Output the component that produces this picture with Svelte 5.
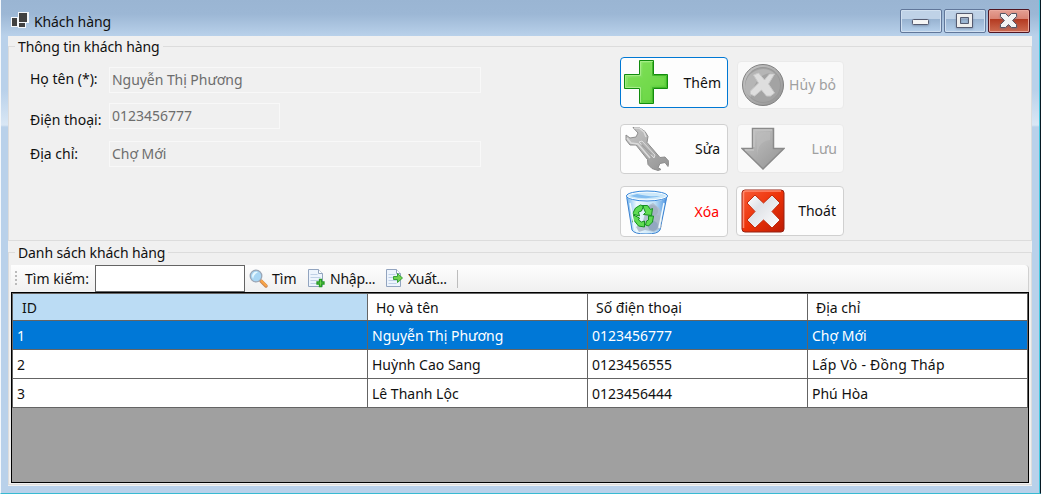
<script>
  const fields = [
    { label: 'Họ tên (*):', value: 'Nguyễn Thị Phương' },
    { label: 'Điện thoại:', value: '0123456777', short: true },
    { label: 'Địa chỉ:', value: 'Chợ Mới' }
  ];
  const actions = [
    { text: 'Thêm', icon: 'plus', cls: 'add' },
    { text: 'Hủy bỏ', icon: 'cancel', cls: 'cancel', off: true },
    { text: 'Sửa', icon: 'wrench', cls: 'edit' },
    { text: 'Lưu', icon: 'down', cls: 'save', off: true },
    { text: 'Xóa', icon: 'bin', cls: 'delete' },
    { text: 'Thoát', icon: 'exit', cls: 'exit' }
  ];
  const rows = [
    ['1', 'Nguyễn Thị Phương', '0123456777', 'Chợ Mới'],
    ['2', 'Huỳnh Cao Sang', '0123456555', 'Lấp Vò - Đồng Tháp'],
    ['3', 'Lê Thanh Lộc', '0123456444', 'Phú Hòa']
  ];
</script>

{#snippet picture(name)}
  <svg class="picture" width="44" height="44" viewBox="0 0 44 44">
    {#if name === 'plus'}
      <path d="M15.500.500h14v14h14v14h-14v15h-14v-15H.500v-14h15z" fill="url(#green)" stroke="#128c0e" />
      <path d="M16.500 42.500V27.500H1.500V15.500H16.500V1.500H28.500" fill="none" stroke="#a5ed85" />
      <path d="M18.500 3h8v14.500h14v8h-14V40h-8V25.500H4v-8h14.500z" fill="#75dc4c" opacity=".7" />
      <path d="M28.500 2v13.500H42.500v12H28.500V42" fill="none" stroke="#43b828" />
    {:else if name === 'cancel'}
      <circle cx="22" cy="22" r="20.500" fill="url(#gray)" stroke="#818181" />
      <circle cx="22" cy="22" r="17.500" fill="#a3a3a3" stroke="#989898" />
      <path d="M4 24a18 18 0 0 1 29-14C24 9 14 14 10 34Q4 31 4 24" fill="#b5b5b5" />
      <path d="M12.500 12l5-2 6 7 5-6h5l-6 10 6 9-4 3h-4l-5-6-7 6-4-2v-3l8-8-5-8z" fill="#dedede" stroke="#c9c9c9" />
    {:else if name === 'wrench'}
      <path d="M8 .5h6l6 4 3 5-1 6 13 15 5-.5 4 4.500-1 5-3-4-5 1-2 4 3 2-3 1-6-2-4-4-.5-5L11 18H5l-4-5V8l4 3 6-1 2-4z" fill="url(#gray)" stroke="#8d8d8d" />
      <path d="M9 1h5l5 4 2 5M2 11l4 5 7 1 12 14" fill="none" stroke="#dcdcdc" stroke-width="1.500" />
      <path d="M14 15l3-1 13 14-1 3z" fill="#b2b2b2" stroke="#dedede" />
      <path d="M17 18l9 9" stroke="#9f9f9f" stroke-width="1.500" stroke-linecap="round" />
    {:else if name === 'down'}
      <path d="M11.500 1.500h21v20h10.500l-21 20.500L1 21.500h10.500z" fill="url(#gray)" stroke="#8a8a8a" stroke-width="1.500" />
      <path d="M13 20V3h18M4 23h9" fill="none" stroke="#c4c4c4" stroke-width="1.500" />
      <path d="M16 7q7-3 13-2v8q-12 1-13 16z" fill="#bdbdbd" opacity=".6" />
    {:else if name === 'bin'}
      <path d="M1.500 6L7 40q2 4 14 4t14-4l7-34z" fill="url(#glass)" stroke="#3b82d0" />
      <path d="M22 16l6-3 6 5 2 4-1 8 2 7-8 5-9-2-6 2-3-5 7-6z" fill="#aebccd" opacity=".9" />
      <circle cx="27" cy="21" r="6" fill="#a2b1c3" /><circle cx="32" cy="30" r="5" fill="#aab8c8" /><circle cx="28" cy="36" r="5" fill="#92a7c1" />
      <path d="M7.500 24l3-6 5-3 3 1-2 5-3 1 1 4zM17.500 15.500h5l3 4 2-1-1 7-8-1 2-2zM23.500 26h5l-1 6-4 4-3-1 1-4 2-1zM19.500 31v6l-6-1-4-5-2 1 1-7 6 3-1 2 3 2z" fill="#5fdc54" stroke="#158f20" />
      <ellipse cx="22" cy="6" rx="20" ry="4.500" fill="#cce8fa" stroke="#fff" stroke-width="2" />
      <ellipse cx="22" cy="6" rx="20.500" ry="5" fill="none" stroke="#3285da" />
      <path d="M5 6q18 5 34-1Q30 8 12 4" fill="#82bdf0" />
      <path d="M5 13l5 27M39 13l-5 25" stroke="#effaff" stroke-width="1.500" />
    {:else}
      <rect x="1" y="1" width="42" height="42" rx="3" fill="url(#red)" stroke="#942315" />
      <path d="M2.500 39V4q0-2 2-2H40" fill="none" stroke="#ff8c70" stroke-width="1.500" />
      <path d="M6 14l8-8 8.500 8L31 6l8 8-8 8.500 8 8.500-8 8-8.500-8-8.500 8-8-8 8-8.500z" fill="url(#silver)" stroke="#c12a0c" />
    {/if}
  </svg>
{/snippet}

{#snippet sheet(kind)}
  <svg class="sheet" width="19" height="19" viewBox="0 0 19 19">
    <path d="M1.500.5h10l4 4v13h-14z" fill="#edf4fd" stroke="#92a4bf" />
    <path d="M11.500.5v4h4" fill="#fff" stroke="#92a4bf" />
    <path d="M3.500 5.500h7M3.500 8.500h10M3.500 11.500h10M3.500 14.500h8" stroke="#bfd0e6" />
    {#if kind === 'import'}
      <path d="M12.500 10.500h2V13H17v2h-2.500v2.500h-2V15H10v-2h2.500z" fill="#86e35c" stroke="#269b25" stroke-width="1.300" />
    {:else}
      <path d="M8.500 7.500h4V4.500l5 4.500-5 4.500v-3h-4z" fill="#72d34e" stroke="#35a236" />
    {/if}
  </svg>
{/snippet}

<svg class="defs" width="0" height="0">
  <defs>
    <linearGradient id="green" x2="1" y2="1"><stop stop-color="#a0ed7d" /><stop offset="1" stop-color="#47c529" /></linearGradient>
    <linearGradient id="gray" x2="1" y2="1"><stop stop-color="#c8c8c8" /><stop offset="1" stop-color="#929292" /></linearGradient>
    <linearGradient id="red" x2="1" y2="1"><stop stop-color="#f85c37" /><stop offset=".5" stop-color="#ed3208" /><stop offset="1" stop-color="#bc1c05" /></linearGradient>
    <linearGradient id="silver" x2="1" y2="1"><stop stop-color="#fff" /><stop offset=".35" stop-color="#dfe2e7" /><stop offset="1" stop-color="#fff" /></linearGradient>
    <linearGradient id="glass"><stop stop-color="#73b5ef" /><stop offset=".25" stop-color="#eefaff" /><stop offset=".7" stop-color="#bfe0f6" /><stop offset="1" stop-color="#4a92e2" /></linearGradient>
  </defs>
</svg>

<main class="window">
  <header class="titlebar">
    <svg class="appicon" width="18" height="16" viewBox="0 0 18 16">
      <path d="M7 0h11v11h-3v5H7v-1H0V5h7z" fill="#f4f7fb" />
      <path d="M8 1h8v9H8zM1 6h5v8H1zM8 11h6v4H8z" fill="#414141" />
    </svg>
    <span class="title">Khách hàng</span>
    <div class="controls">
      <span class="control"><svg width="40" height="22" viewBox="0 0 40 22"><rect x="11.500" y="9.500" width="16" height="5" rx="1" fill="#f5f5f5" stroke="#555b70" /></svg></span>
      <span class="control"><svg width="40" height="22" viewBox="0 0 40 22"><path d="M11.500 3.500h16v14h-16zM15.500 7.500v6h8v-6z" fill="#eee" fill-rule="evenodd" stroke="#555b70" /></svg></span>
      <span class="control close"><svg width="40" height="22" viewBox="0 0 40 22"><path d="M11.500 3.500h5l3 3 3-3h5v3l-4 4 4 4v3h-5l-3-3-3 3h-5v-3l4-4-4-4z" fill="#f3f3f3" stroke="#565664" /></svg></span>
    </div>
  </header>
  <div class="client">
    <fieldset class="info">
      <legend>Thông tin khách hàng</legend>
      <div class="form">
        {#each fields as field}
          <label class="field"><span>{field.label}</span><span class="value" class:short={field.short}>{field.value}</span></label>
        {/each}
      </div>
      <div class="actions">
        {#each actions as action}
          <button class={action.cls} disabled={action.off}>{@render picture(action.icon)}<span>{action.text}</span></button>
        {/each}
      </div>
    </fieldset>
    <fieldset class="list">
      <legend>Danh sách khách hàng</legend>
      <div class="toolbar">
        <span class="grip"></span>
        <span class="find">Tìm kiếm:</span>
        <input aria-label="Tìm kiếm" />
        <svg class="lens" width="20" height="20" viewBox="0 0 20 20">
          <path d="M12 12l5 5" stroke="#c98450" stroke-width="3.500" stroke-linecap="round" />
          <path d="M12.500 12l4.500 4.500" stroke="#f9a547" stroke-width="2.200" stroke-linecap="round" />
          <circle cx="7" cy="7" r="5.800" fill="#a8d6f4" stroke="#9aa6b6" stroke-width="1.300" />
          <path d="M3 7q1-5 6-4Q5 5 4 10" fill="#e6f8ff" />
        </svg>
        <span class="search">Tìm</span>
        {@render sheet('import')}<span class="import">Nhập...</span>
        {@render sheet('export')}<span class="export">Xuất...</span>
        <i></i>
      </div>
      <div class="table">
        <div class="row head"><span>ID</span><span>Họ và tên</span><span>Số điện thoại</span><span>Địa chỉ</span></div>
        {#each rows as row, i}
          <div class="row" class:selected={i === 0}>{#each row as cell}<span class:long={cell.length > 17 }>{cell}</span>{/each}</div>
        {/each}
      </div>
    </fieldset>
  </div>
</main>

<style>
  :global(body) { margin: 0; overflow: hidden; }
  * { box-sizing: border-box; }
  .defs { display: block; }
  .window {
    width: 1041px; height: 494px; padding: 0 7px;
    border-left: 1px solid #f4f8fc; border-right: 1px solid #071923; border-bottom: 1px solid #38bad2;
    box-shadow: inset -1px 0 #43c8df;
    background: linear-gradient(#9ab5d3 0, #9cb7d5 14px, #b9d1ea 36px, #b9d1ea 90px, #d9e7f5 125px, #b9d1ea 127px, #b9d1ea);
    font: 14px/20px "Noto Sans", "Open Sans", sans-serif; color: #111;
  }
  .titlebar { height: 36px; display: flex; align-items: flex-start; }
  .appicon { margin: 12px 0 0 3px; }
  .title { margin: 12px 0 0 5px; letter-spacing: -.1px; }
  .controls { display: flex; gap: 2px; margin: 9px 3px 0 auto; }
  .control { width: 42px; height: 24px; border: 1px solid #61779a; border-radius: 2px; box-shadow: inset 0 0 0 1px #d1e0f0; background: linear-gradient(#bfd2e7 0 42%, #98b3d1 43%, #b6d0eb); }
  .control svg { display: block; filter: drop-shadow(0 1px 1px #5f718c88); }
  .close { border-color: #501521; box-shadow: inset 0 0 0 1px #eba99d; background: linear-gradient(#e5a094 0, #d98272 42%, #b43b22 43%, #ce6c51); }
  .client { width: 1024px; height: 450px; background: #f0f0f0; display: flex; flex-direction: column; }
  fieldset { margin: 0; padding: 0; min-width: 0; border: 1px solid #dcdcdc; position: relative; }
  legend { position: absolute; top: -10px; left: 6px; padding: 0 3px; background: #f0f0f0; white-space: nowrap; letter-spacing: -.1px; }
  .info { margin-top: 10px; height: 195px; display: flex; }
  .form { padding: 20px 0 0 21px; width: 611px; display: flex; flex-direction: column; gap: 11px; }
  .field { display: flex; height: 26px; line-height: 24px; white-space: nowrap; }
  .field > span:first-child { width: 79px; }
  .field:nth-child(2) { margin-top: -1px; margin-bottom: 1px; }
  .field:nth-child(2) > span:first-child { padding-top: 5px; }
  .field:nth-child(3) > span:first-child { padding-top: 1px; }
  .value { width: 372px; height: 26px; padding-left: 2px; border: 1px solid #f8f8f8; color: #6d6d6d; letter-spacing: -.05px; }
  .short { width: 171px; letter-spacing: 0; }
  .actions { display: grid; grid-template-columns: 108px 108px; column-gap: 8px; grid-template-rows: 67px 62px 52px; padding-top: 10px; align-items: start; }
  button { display: flex; align-items: center; justify-content: space-between; width: 108px; height: 50px; padding: 0 7px 0 4px; margin: 0; font: inherit; color: #111; background: #fdfdfd; border: 1px solid #d0d0d0; border-radius: 4px; }
  button:disabled { background: #f9f9f9; border-color: #eaeaea; color: #a0a0a0; }
  .add { height: 51px; padding: 0 6px 2px 3px; border-color: #0078d4; }
  .add span { padding-top: 2px; }
  .cancel { height: 48px; width: 107px; margin: 4px 0 0 1px; padding-left: 3px; }
  .save { height: 49px; width: 107px; margin-left: 1px; padding: 0 6px 0 3px; }
  .delete { height: 51px; padding-right: 8px; color: #f00; }
  .picture { display: block; flex: none; }
  .list { margin-top: 11px; height: 233px; padding: 12px 2px 0; }
  .toolbar { height: 27px; width: 1018px; display: flex; align-items: center; background: linear-gradient(#fdfdfd, #f0f0f0); border-right: 1px solid #d0d0d0; border-radius: 0 4px 0 0; white-space: nowrap; }
  .grip { width: 2px; height: 16px; margin: 0 8px 0 4px; background: repeating-linear-gradient(#bbb 0 2px, transparent 2px 4px); }
  .find { width: 70px; }
  input { width: 150px; height: 27px; padding: 0; border: 1px solid #646464; background: #fff; }
  .lens { margin: 0 3px 0 4px; }
  .search { width: 35px; }
  .sheet { margin-right: 4px; }
  .import { width: 55px; letter-spacing: -.25px; }
  .export { width: 49px; letter-spacing: -.35px; }
  .toolbar i { width: 1px; height: 18px; background: #bdbdbd; }
  .table { width: 1018px; height: 191px; border: 1px solid #000; background: #a0a0a0; }
  .row { width: 1016px; height: 29px; display: grid; grid-template: 29px / 355px 220px 220px 220px; border-left: 1px solid #646464; background: #fff; line-height: 30px; }
  .row span { border-right: 1px solid #646464; border-bottom: 1px solid #646464; padding-left: 4px; white-space: nowrap; }
  .row .long { letter-spacing: .25px; }
  .head { height: 28px; grid-template-rows: 27px; border-top: 1px solid #646464; line-height: 28px; }
  .head span { padding-left: 8px; }
  .head span:first-child { background: #bbdcf4; padding-left: 9px; }
  .selected { background: #0078d7; color: #fff; }
</style>
